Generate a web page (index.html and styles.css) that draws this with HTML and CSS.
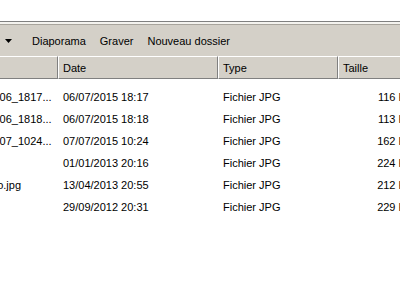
FILE: index.html
```html
<!DOCTYPE html>
<html lang="fr">
<head>
<meta charset="utf-8">
<link rel="stylesheet" href="styles.css">
</head>
<body>
<div class="top"></div>
<div class="rule-dark"></div>
<div class="rule-light"></div>
<div class="rule-mid"></div>
<div class="toolbar">
  <span class="drop"><svg width="7" height="4" viewBox="0 0 7 4"><path d="M0 0H7L3.5 4Z" fill="#000"/></svg></span>
  <span class="btn">Diaporama</span>
  <span class="btn">Graver</span>
  <span class="btn">Nouveau dossier</span>
</div>
<div class="grid head">
  <div class="hc name"></div>
  <div class="hc">Date</div>
  <div class="hc">Type</div>
  <div class="hc">Taille</div>
</div>
<div class="list">
  <div class="grid row"><div class="c name"><span>IMG_20150706_1817...</span></div><div class="c">06/07/2015 18:17</div><div class="c">Fichier JPG</div><div class="c size">116 Ko</div></div>
  <div class="grid row"><div class="c name"><span>IMG_20150706_1818...</span></div><div class="c">06/07/2015 18:18</div><div class="c">Fichier JPG</div><div class="c size">113 Ko</div></div>
  <div class="grid row"><div class="c name"><span>IMG_20150707_1024...</span></div><div class="c">07/07/2015 10:24</div><div class="c">Fichier JPG</div><div class="c size">162 Ko</div></div>
  <div class="grid row"><div class="c name"><span>Nouvel.jpg</span></div><div class="c">01/01/2013 20:16</div><div class="c">Fichier JPG</div><div class="c size">224 Ko</div></div>
  <div class="grid row"><div class="c name"><span>Plages_photo.jpg</span></div><div class="c">13/04/2013 20:55</div><div class="c">Fichier JPG</div><div class="c size">212 Ko</div></div>
  <div class="grid row"><div class="c name"><span>Fond.jpg</span></div><div class="c">29/09/2012 20:31</div><div class="c">Fichier JPG</div><div class="c size">229 Ko</div></div>
</div>
</body>
</html>
```
FILE: styles.css
```css
html, body {
  margin: 0;
  padding: 0;
  background: #fff;
  overflow: hidden;
}
body {
  width: 400px;
  height: 300px;
  font-family: "Liberation Sans", Arial, sans-serif;
  font-size: 11px;
  color: #000;
}
.top { height: 21px; background: #fff; }
.rule-dark { height: 1px; background: #808080; }
.rule-light { height: 2px; background: #f4f3ef; }
.rule-mid { height: 1px; background: #a8a49c; }
.toolbar {
  height: 31px;
  background: #d4d0c8;
  display: flex;
  align-items: center;
  padding-left: 5px;
}
.drop { display: flex; width: 7px; height: 4px; margin-right: 20px; }
.btn { margin-right: 14px; }
.grid {
  display: grid;
  grid-template-columns: 58px 160px 120px 80px;
  width: 418px;
}
.head { height: 23px; background: #d4d0c8; }
.hc {
  border-top: 1px solid #fff;
  border-left: 1px solid #fff;
  border-right: 1px solid #808080;
  border-bottom: 1px solid #808080;
  display: flex;
  align-items: center;
  padding-left: 4px;
}
.hc.name { border-left: none; }
.list { padding-top: 7px; }
.row { height: 22px; }
.c {
  display: flex;
  align-items: center;
  padding-left: 5px;
  white-space: nowrap;
  overflow: hidden;
}
.c.name { padding-left: 0; }
.c.name span { margin-left: -64px; }
.c.size { justify-content: flex-end; padding-right: 6px; }
```
